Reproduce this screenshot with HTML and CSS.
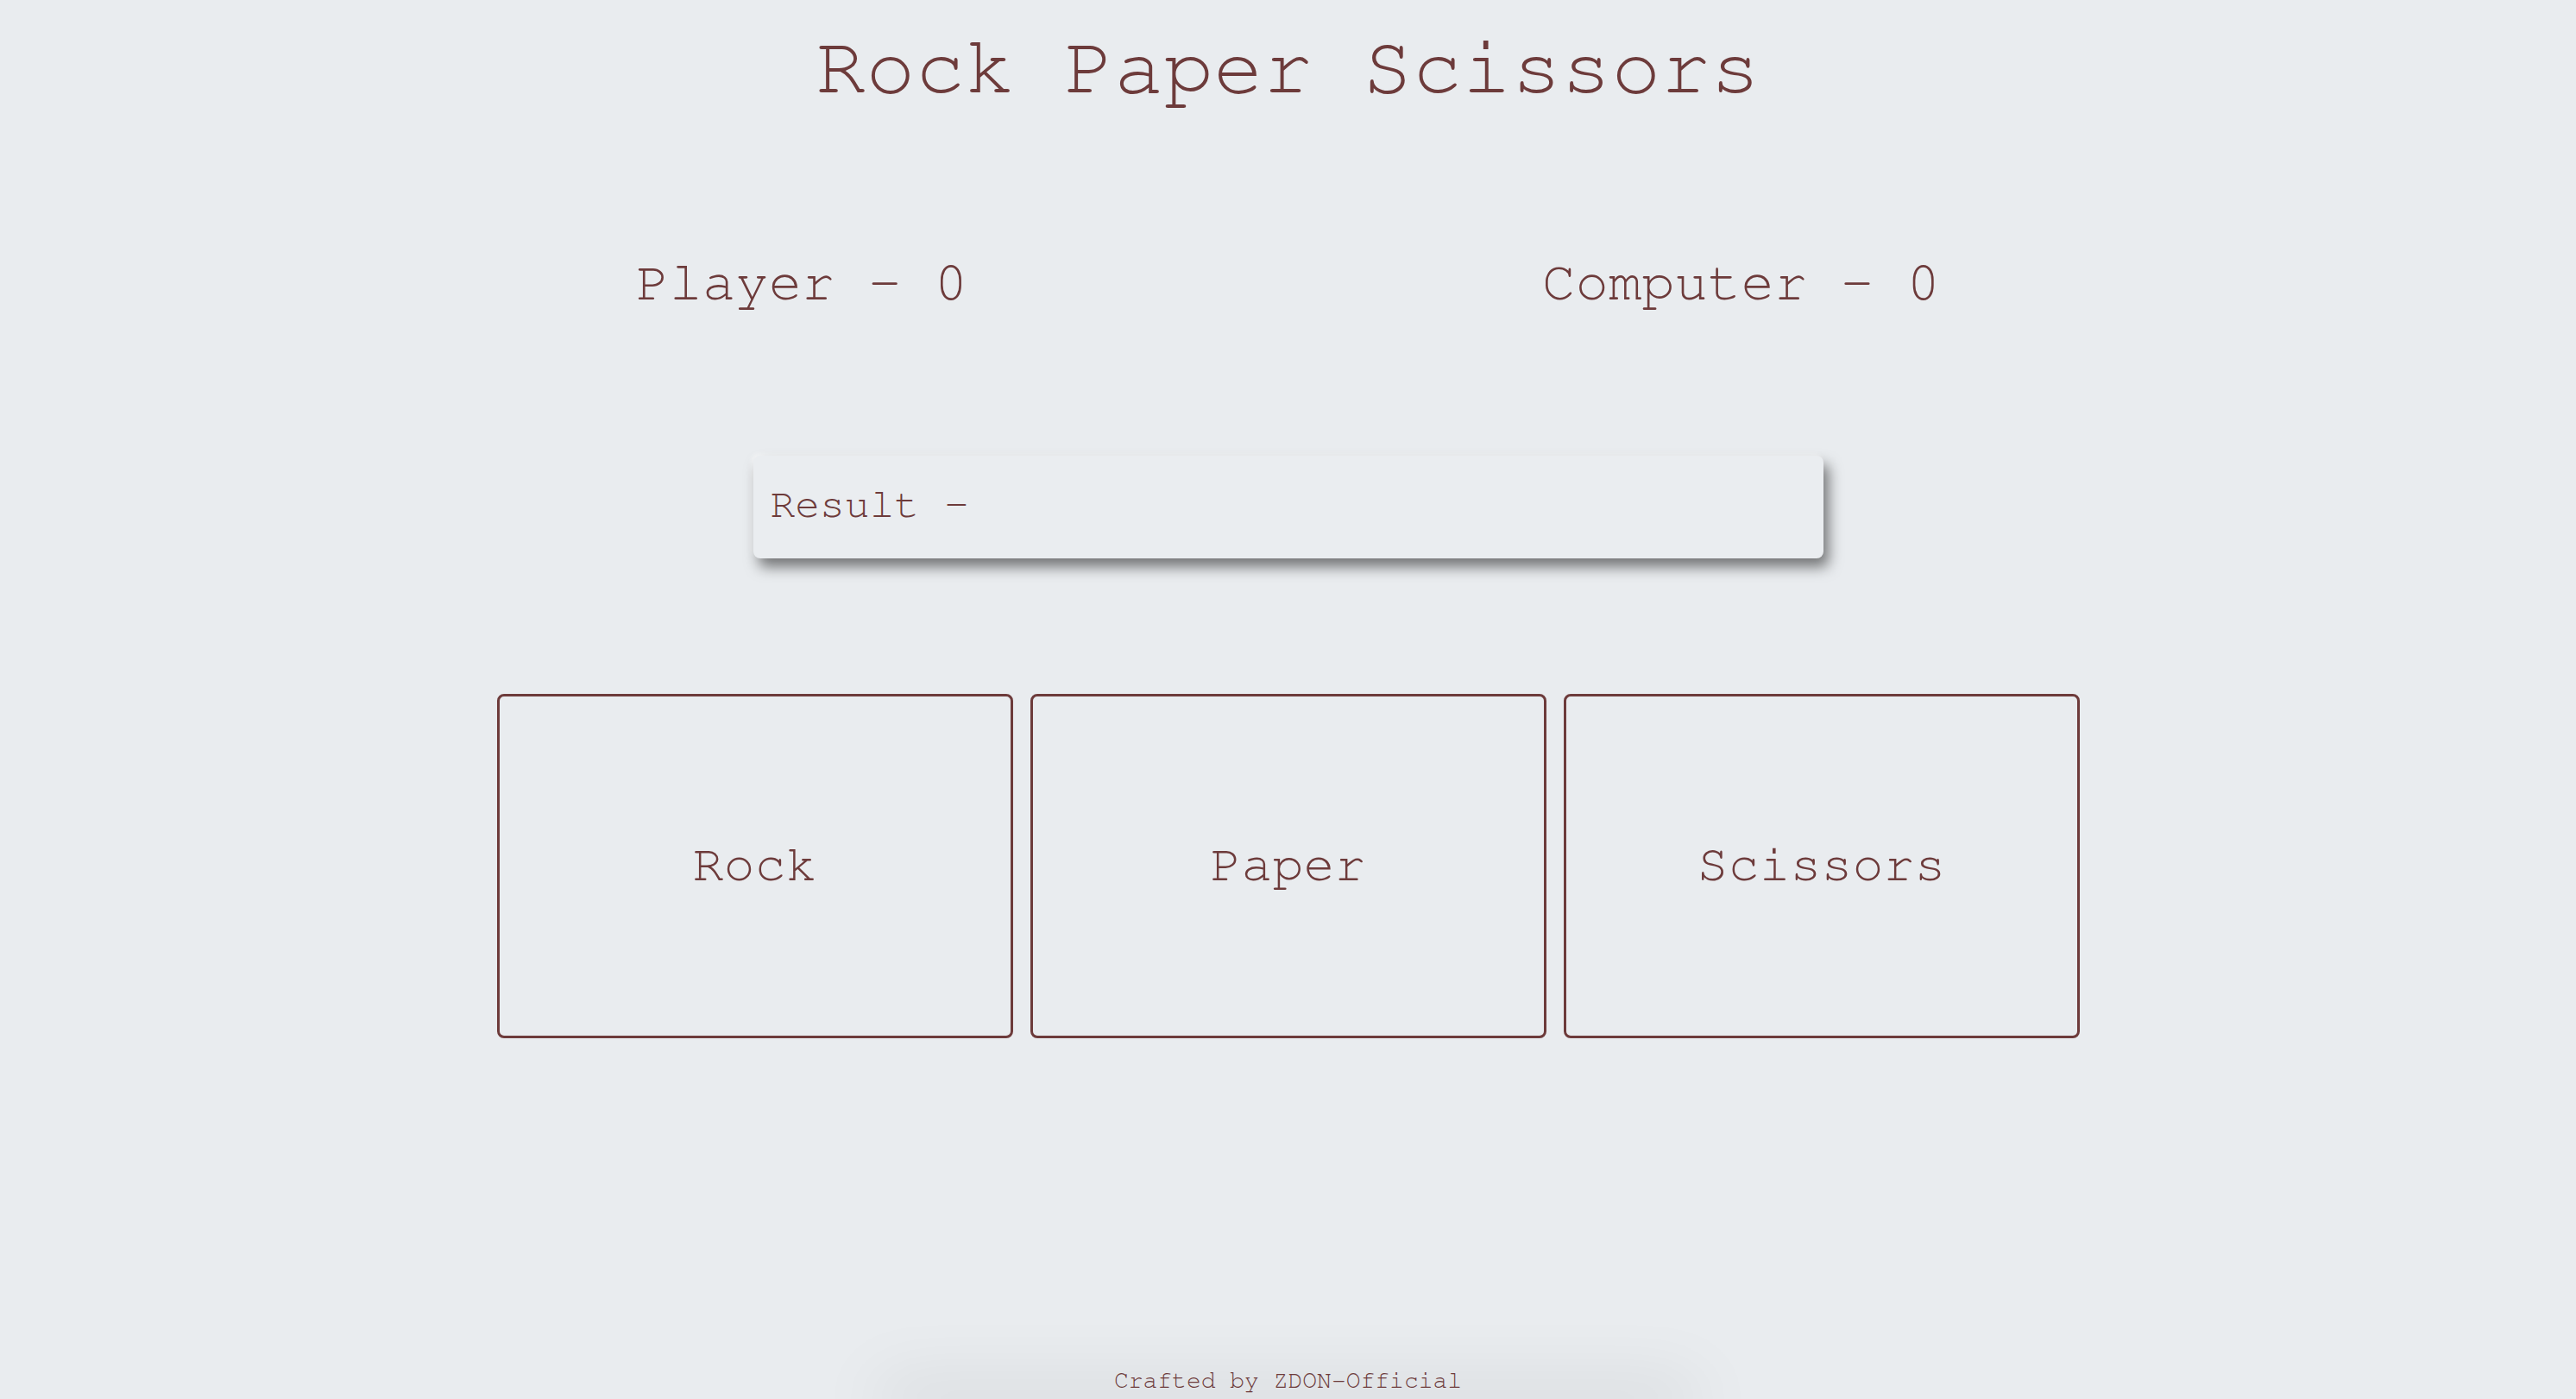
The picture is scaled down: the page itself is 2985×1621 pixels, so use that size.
FILE: index.html
```html
<!DOCTYPE html>
<html lang="en">
<head>
<meta charset="utf-8">
<title>Rock Paper Scissors</title>
<link rel="stylesheet" href="styles.css">
</head>
<body>
  <h1 class="title">Rock Paper Scissors</h1>
  <div class="scores">
    <div class="score">Player - 0</div>
    <div class="score">Computer - 0</div>
  </div>
  <div class="result">Result - </div>
  <div class="choices">
    <button class="choice">Rock</button>
    <button class="choice">Paper</button>
    <button class="choice">Scissors</button>
  </div>
  <footer class="footer">Crafted by ZDON-Official</footer>
</body>
</html>
```

FILE: styles.css
```css
html {
  background: #e9ecef;
}
body {
  margin: 0;
  min-height: 100vh;
  display: flex;
  flex-direction: column;
  align-items: center;
  color: #6d3b3b;
  font-family: "Nimbus Mono PS", "Nimbus Mono L", "FreeMono", "Courier New", "Liberation Mono", monospace;
  overflow: hidden;
}
.title {
  margin: 24px 0 0;
  font-size: 96px;
  font-weight: normal;
  line-height: 109px;
}
.scores {
  margin-top: 159px;
  display: flex;
  gap: 666px;
  font-size: 64px;
  line-height: 72px;
}
.result {
  margin-top: 164px;
  box-sizing: border-box;
  width: 1240px;
  padding: 30px 20px 34px;
  font-size: 48px;
  line-height: 55px;
  white-space: pre;
  border-radius: 8px;
  background: #eaedf0;
  box-shadow: 6px 10px 16px rgba(0, 0, 0, 0.5), -2px -2px 5px rgba(255, 255, 255, 0.6);
}
.choices {
  margin-top: 157px;
  display: flex;
  gap: 20px;
}
.choice {
  box-sizing: border-box;
  width: 598px;
  height: 399px;
  border: 3px solid #6d3b3b;
  border-radius: 8px;
  background: transparent;
  color: #6d3b3b;
  font-family: inherit;
  font-size: 60px;
  padding: 0 0 4px;
  cursor: pointer;
}
.footer {
  position: relative;
  margin-top: auto;
  padding-bottom: 5px;
  font-size: 28px;
  line-height: 32px;
}
.footer::before {
  content: "";
  position: absolute;
  left: 50%;
  top: 100%;
  width: 920px;
  height: 0;
  transform: translateX(-50%);
  box-shadow: 0 0 80px 14px rgba(0, 0, 0, 0.13);
  z-index: -1;
}
```
